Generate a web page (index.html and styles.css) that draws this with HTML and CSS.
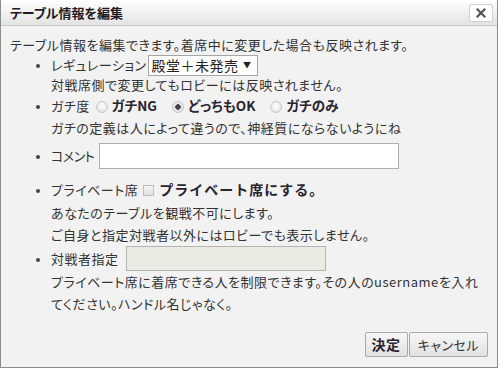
FILE: index.html
```html
<!DOCTYPE html>
<html lang="ja">
<head>
<meta charset="utf-8">
<link rel="stylesheet" href="styles.css">
</head>
<body>
<div class="dialog">
  <div class="titlebar">
    <span class="title">テーブル情報を編集</span>
    <button class="close" type="button" aria-label="close">
      <svg width="10" height="10" viewBox="0 0 10 10"><path d="M1.5 1.5 L8.5 8.5 M8.5 1.5 L1.5 8.5" stroke="#555" stroke-width="2.2" stroke-linecap="square"/></svg>
    </button>
  </div>
  <div class="content">
    <p class="intro">テーブル情報を編集できます。着席中に変更した場合も反映されます。</p>
    <ul class="fields">
      <li class="row">レギュレーション<span class="selectwrap"><select class="select"><option>殿堂＋未発売</option></select><span class="arrow">▼</span></span></li>
      <li class="note nobullet">対戦席側で変更してもロビーには反映されません。</li>
      <li class="row">ガチ度<label class="opt"><input type="radio" name="g" class="radio"><b>ガチNG</b></label><label class="opt"><input type="radio" name="g" class="radio" checked><b>どっちもOK</b></label><label class="opt"><input type="radio" name="g" class="radio"><b>ガチのみ</b></label></li>
      <li class="note nobullet gap2">ガチの定義は人によって違うので、神経質にならないようにね</li>
      <li class="row comment"><span class="narrow">コメント</span><input type="text" class="text"></li>
      <li class="row private">プライベート席<label class="opt"><input type="checkbox" class="check"><b class="wide">プライベート席にする。</b></label></li>
      <li class="note nobullet para">あなたのテーブルを観戦不可にします。<br>ご自身と指定対戦者以外にはロビーでも表示しません。</li>
      <li class="row opp">対戦者指定<input type="text" class="text disabled" disabled></li>
      <li class="note nobullet para2">プライベート席に着席できる人を制限できます。その人のusernameを入れ<br>てください。ハンドル名じゃなく。</li>
    </ul>
    <div class="buttons">
      <button class="btn ok" type="button">決定</button><button class="btn" type="button">キャンセル</button>
    </div>
  </div>
</div>
</body>
</html>
```
FILE: styles.css
```css
html, body {
  margin: 0;
  padding: 0;
  background: #ffffff;
}
body {
  font-family: "Noto Sans CJK JP", "Noto Sans", sans-serif;
  font-size: 13px;
  color: #333;
  font-feature-settings: "palt";
  letter-spacing: 0.5px;
}
.dialog {
  width: 496px;
  height: 367px;
  border: 1px solid #8c8c8c;
  border-top: none;
  background: #f2f2f2;
  display: flex;
  flex-direction: column;
}
.titlebar {
  height: 26px;
  box-sizing: border-box;
  background: linear-gradient(#ffffff, #e3e3e3);
  border-bottom: 1px solid #c8c8c8;
  display: flex;
  align-items: center;
  justify-content: space-between;
  padding: 0 4px 0 9px;
}
.title {
  font-weight: bold;
  color: #1f1a24;
  font-size: 13px;
  line-height: 20px;
  letter-spacing: 0;
}
.close {
  width: 24px;
  height: 18px;
  border: 1px solid #cfcfcf;
  border-radius: 2px;
  background: #fff;
  padding: 0;
  display: flex;
  align-items: center;
  justify-content: center;
}
.content {
  flex: 1;
  padding: 9px 9px 0 9px;
  display: flex;
  flex-direction: column;
}
.intro {
  margin: 0;
  line-height: 20px;
}
.fields {
  margin: 0;
  padding: 0 0 0 41px;
  list-style: disc;
}
.fields li {
  line-height: 20px;
}
.fields li::marker {
  font-size: 10px;
  color: #444;
}
.nobullet {
  list-style: none;
}
.row {
  height: 20px;
}
.selectwrap {
  position: relative;
  display: inline-block;
  vertical-align: top;
  margin-left: 1px;
}
.select {
  appearance: none;
  -webkit-appearance: none;
  width: 110px;
  height: 21px;
  border: 1px solid #a5a5a5;
  background: #fff;
  font-family: inherit;
  font-size: 14px;
  color: #222;
  padding: 0 0 0 3px;
  margin: 0;
  line-height: 19px;
  letter-spacing: 0.5px;
  font-feature-settings: "palt";
}
.arrow {
  position: absolute;
  right: 6px;
  top: 5px;
  font-size: 8px;
  line-height: 10px;
  color: #222;
  pointer-events: none;
}
.opt {
  margin-right: 7px;
}
.opt b {
  color: #2a2330;
  font-size: 13.5px;
  letter-spacing: 0;
}
.opt b.wide {
  font-size: 14px;
  font-feature-settings: normal;
  letter-spacing: 1px;
}
.radio {
  appearance: none;
  -webkit-appearance: none;
  width: 12px;
  height: 12px;
  border-radius: 50%;
  border: 1px solid #c8c8c8;
  background: radial-gradient(circle at 50% 40%, #ffffff, #dcdcdc);
  margin: 0 4px 0 8px;
  vertical-align: -2px;
  box-sizing: border-box;
}
.opt:first-child .radio {
  margin-left: 6px;
}
.radio:checked {
  background: radial-gradient(circle, #444 0 2.5px, #ececec 3px, #d9d9d9);
}
.check {
  appearance: none;
  -webkit-appearance: none;
  width: 11px;
  height: 11px;
  border: 1px solid #bdbdbd;
  background: linear-gradient(#f6f6f6, #dedede);
  margin: 0 5px 0 5px;
  vertical-align: -1px;
  box-sizing: border-box;
}
.gap2 {
  margin-top: 2px;
  line-height: 22px !important;
}
.comment {
  margin-top: 4px;
  height: 26px;
}
.narrow {
  letter-spacing: -0.5px;
}
.text {
  width: 300px;
  height: 26px;
  box-sizing: border-box;
  border: 1px solid #b0b0b0;
  background: #fff;
  vertical-align: top;
  margin: 0 0 0 5px;
  padding: 0 4px;
  line-height: 24px;
}
.comment, .opp {
  line-height: 26px !important;
}
.private {
  margin-top: 10px;
}
.para {
  margin-top: 3px;
  line-height: 22px !important;
}
.opp {
  height: 25px;
}
.opp .text {
  width: 200px;
  height: 25px;
  margin-left: 7px;
}
.disabled {
  background: #ebebe4;
  border-color: #b4b4b0;
}
.para2 {
  line-height: 22px !important;
  white-space: nowrap;
}
.buttons {
  margin-top: auto;
  margin-bottom: 10px;
  display: flex;
  justify-content: flex-end;
  gap: 1px;
}
.btn {
  height: 25px;
  border: 1px solid #a9a9a9;
  border-radius: 2px;
  background: linear-gradient(#f7f7f7, #e1e1e1);
  font-family: inherit;
  font-size: 13px;
  color: #333;
  padding: 0 8px;
  line-height: 23px;
  font-feature-settings: "palt";
  letter-spacing: 0.5px;
}
.btn.ok {
  font-weight: bold;
  font-size: 14px;
  color: #2a2330;
  padding: 0 6px;
}
```
